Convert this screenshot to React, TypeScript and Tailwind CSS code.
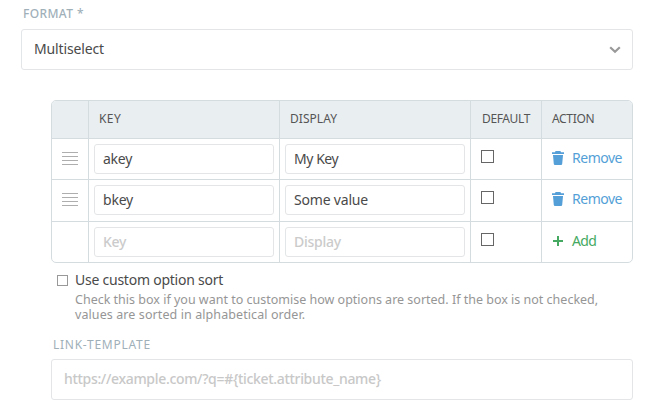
import { Check } from "lucide-react";
import { useState } from "react";

type Option = { key: string; display: string };

const options: Option[] = [
  { key: "akey", display: "My Key" },
  { key: "bkey", display: "Some value" },
];

const trackings: Record<string, string> = {
  akey: "tracking-[-0.27px]",
  bkey: "tracking-[-0.21px]",
  "My Key": "tracking-[-0.45px]",
  "Some value": "tracking-[-0.19px]",
};

const GRID = "grid grid-cols-[37px_191px_191px_71px_91px]";

function Grip() {
  return (
    <div className="mt-[13px] ml-[10px] flex w-4 flex-col gap-[3px]">
      <i className="h-px bg-[#aeaeae]" />
      <i className="h-px bg-[#aeaeae]" />
      <i className="h-px bg-[#aeaeae]" />
      <i className="h-px bg-[#aeaeae]" />
    </div>
  );
}

function Trash() {
  return (
    <svg width="12" height="14" viewBox="0 0 12 14" fill="#549fd7">
      <path d="M3 1.2Q3 0 4.2 0h3.6Q9 0 9 1.2H12V3H0V1.2Z" />
      <path d="M1 4h10l-.8 8.9Q10.100 14 9 14H3Q1.900 14 1.800 12.900Z" />
    </svg>
  );
}

function Plus() {
  return (
    <svg width="12" height="14" viewBox="0 0 12 14" fill="#45a962">
      <path d="M5 2h2v4h4v2H7v4H5V8H1V6h4Z" />
    </svg>
  );
}

function CheckBox({ label, className }: { label: string; className: string }) {
  const [on, setOn] = useState(false);
  return (
    <button
      type="button"
      role="checkbox"
      aria-checked={on}
      aria-label={label}
      onClick={() => setOn(!on)}
      className={`block shrink-0 border bg-white ${className}`}
    >
      {on && <Check className="size-full" />}
    </button>
  );
}

function Field({ value, placeholder }: { value?: string; placeholder: string }) {
  return (
    <input
      defaultValue={value}
      placeholder={placeholder}
      className={`mt-[5px] ml-[5px] block h-[30px] w-[180px] rounded-[3px] border border-[#e3e5e7] bg-white px-2 pb-px text-[14px] text-[#4a4a4a] outline-none placeholder:font-medium placeholder:tracking-[-0.25px] placeholder:text-[#cbcbcb] ${value ? trackings[value] : ""}`}
    />
  );
}

function Row({ option, height }: { option?: Option; height: string }) {
  return (
    <div className={`${GRID} ${height} divide-x divide-[#d5dce0] border-t border-[#d5dce0]`}>
      <div>{option && <Grip />}</div>
      <div>
        <Field value={option?.key} placeholder="Key" />
      </div>
      <div>
        <Field value={option?.display} placeholder="Display" />
      </div>
      <div>
        <CheckBox label="Default" className="mt-[11px] ml-[10px] size-[13px] border-[#666]" />
      </div>
      <div className="pt-[9px] pl-[10px]">
        {option ? (
          <button type="button" className="flex h-5 items-center gap-2 text-[14px] leading-5 tracking-[-0.48px] text-[#549fd7]">
            <Trash />
            <span>Remove</span>
          </button>
        ) : (
          <button type="button" className="flex h-5 items-center gap-2 text-[14px] leading-5 tracking-[-0.6px] text-[#45a962]">
            <Plus />
            <span>Add</span>
          </button>
        )}
      </div>
    </div>
  );
}

export default function App() {
  return (
    <main className="h-[410px] w-[652px] overflow-hidden bg-white pt-[5px] pl-[21px] font-['Noto_Sans',sans-serif] text-[14px] text-[#4a4a4a]">
      <label className="block h-[24px] pl-[2px] text-[12px] leading-[18px] font-medium tracking-[0.38px] text-[#9fb0b9]">FORMAT *</label>
      <button type="button" className="flex h-[41px] w-[612px] items-center justify-between rounded-[3px] border border-[#e3e5e7] pr-[11px] pl-3">
        <span className="pb-[2px] tracking-[-0.14px]">Multiselect</span>
        <svg width="12" height="8" viewBox="0 0 12 8" fill="none" stroke="#999" strokeWidth="2.2">
          <path d="m1.200 1.200 4.800 4.600 4.800-4.600" />
        </svg>
      </button>

      <section className="mt-[30px] ml-[30px] w-[582px]">
        <div className="h-[163px] overflow-hidden rounded-[5px] border border-[#d5dce0]">
          <div className={`${GRID} h-[37px] divide-x divide-[#d5dce0] bg-[#e9eef1] text-[12px] leading-[35px] text-[#555]`}>
            <div />
            <div className="pl-[10px] tracking-[0.4px]">KEY</div>
            <div className="pl-[10px] tracking-[0.04px]">DISPLAY</div>
            <div className="pl-[11px] tracking-[-0.37px]">DEFAULT</div>
            <div className="pl-[10px] tracking-[-0.33px]">ACTION</div>
          </div>
          <Row option={options[0]} height="h-[41px]" />
          <Row option={options[1]} height="h-[42px]" />
          <Row height="h-[41px]" />
        </div>

        <div className="flex pt-[7px] pl-[6px]">
          <CheckBox label="Use custom option sort" className="mt-[5px] size-[11px] border-[#999]" />
          <div className="pl-[7px]">
            <p className="h-[22px] leading-[20px] tracking-[-0.24px]">Use custom option sort</p>
            <div className="text-[12.5px] leading-[15px] whitespace-nowrap text-[#969696]">
              <p>Check this box if you want to customise how options are sorted. If the box is not checked,</p>
              <p className="tracking-[0.09px]">values are sorted in alphabetical order.</p>
            </div>
          </div>
        </div>

        <label className="mt-[14px] block h-[23px] pl-[2px] text-[12px] leading-[18px] tracking-[0.74px] text-[#9fb0b9]">LINK-TEMPLATE</label>
        <input
          placeholder="https://example.com/?q=#{ticket.attribute_name}"
          className="block h-[41px] w-[582px] rounded-[3px] border border-[#e3e5e7] px-3 pb-[2px] outline-none placeholder:font-medium placeholder:tracking-[-0.32px] placeholder:text-[#c8c8c8]"
        />
      </section>
    </main>
  );
}
